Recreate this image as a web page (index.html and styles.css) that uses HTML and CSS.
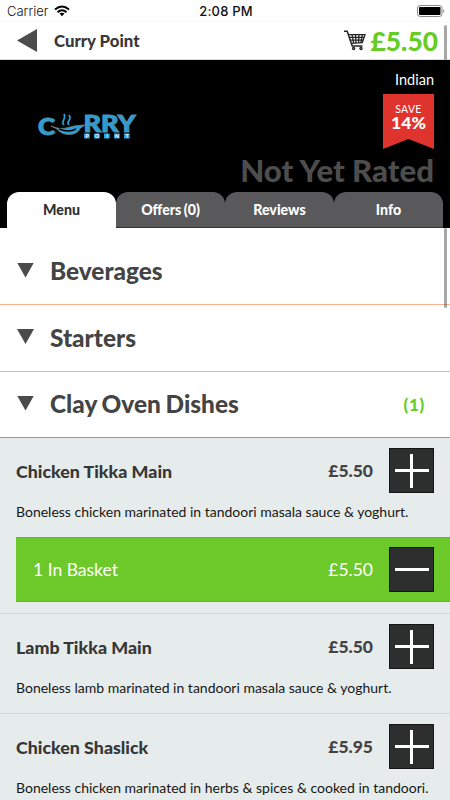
FILE: index.html
```html
<!DOCTYPE html>
<html lang="en">
<head>
<meta charset="utf-8">
<title>Curry Point</title>
<link rel="stylesheet" href="styles.css">
</head>
<body>
<div class="status">
  <div class="carrier"><span>Carrier</span>
    <svg width="16" height="12" viewBox="0 0 16 12"><g fill="none" stroke="#000" stroke-width="2"><path d="M1 4.6Q8-1.6 15 4.6"/><path d="M3.5 7.2Q8 3.2 12.5 7.2"/></g><path d="M5.5 8.6Q8 6.8 10.5 8.6L8 11.3Z"/></svg>
  </div>
  <div class="time">2:08 PM</div>
  <svg class="battery" width="28" height="12" viewBox="0 0 28 12"><rect x=".5" y=".5" width="24.5" height="11" rx="2.7" fill="#fff" stroke="#888"/><rect x="2" y="2" width="21.5" height="8" rx="1"/><path d="M26.3 4Q28.5 6 26.3 8Z" fill="#888"/></svg>
</div>
<header class="nav">
  <svg class="back" width="20" height="23" viewBox="0 0 20 23"><path d="M0 11.5L20 0V23Z" fill="#4d4d4d"/></svg>
  <h1>Curry Point</h1>
  <svg class="cart" width="22" height="21" viewBox="0 0 22 21" fill="none" stroke="#252525" stroke-width="1.3"><path d="M0 1.2H3.2L8.2 16H18.5" stroke-width="1.5"/><path d="M4 4.7H21L18.3 12.7L7.2 13.4M5 7.4H20M5.8 10.2H19M8 4.7L9.6 13M11.5 4.7L12 13M15 4.7L14.5 13M18.3 4.7L16.9 12.7"/><circle cx="9.6" cy="18.6" r="1.1"/><circle cx="17" cy="18.6" r="1.1"/></svg>
  <span class="total">£5.50</span>
</header>
<section class="hero">
  <svg class="logo" width="102" height="40" viewBox="0 -8 102 40">
    <g class="logo-type"><text x="0" y="26" font-size="22" textLength="17" lengthAdjust="spacingAndGlyphs">C</text><text x="45.5" y="23" font-size="22" textLength="52" lengthAdjust="spacingAndGlyphs">RRY</text></g>
    <path d="M13 17Q22 21 30 18.5Q37 16 47 16L42 19.5C39 27 25 28 19 20Z" fill="#299ed9" stroke="#8b8170" stroke-width=".7"/>
    <path d="M21 20Q31 24 38 20" fill="none" stroke="#000" stroke-width="1.6"/>
    <path d="M26 16C22 12 29 10 26 5M31 16C27 12 35 11 31 6" fill="none" stroke="#299ed9" stroke-width="1.7"/>
    <path d="M46 24.5h5.7v5H46zM56 24.5h5.7v5H56zM66 24.5h5.7v5H66zM76 24.5h5.7v5H76zM86 24.5h5.7v5H86z" fill="#299ed9"/>
    <g class="logo-small"><text x="47.4" y="29">P</text><text x="57" y="29">O</text><text x="68.2" y="29">I</text><text x="77" y="29">N</text><text x="87.4" y="29">T</text></g>
  </svg>
  <div class="facts">
    <div class="cuisine">Indian</div>
    <div class="ribbon"><span>SAVE</span><strong>14%</strong></div>
    <div class="rating">Not Yet Rated</div>
  </div>
</section>
<nav class="tabs"><div class="tab active">Menu</div><div class="tab">Offers (0)</div><div class="tab">Reviews</div><div class="tab">Info</div></nav>
<main>
  <div class="category first"><i></i><h2>Beverages</h2></div>
  <div class="category second"><i></i><h2>Starters</h2></div>
  <div class="category open"><i></i><h2>Clay Oven Dishes</h2><b>(1)</b></div>
  <article class="dish">
    <div class="line"><h3>Chicken Tikka Main</h3><span class="price">£5.50</span><span class="button plus"></span></div>
    <p>Boneless chicken marinated in tandoori masala sauce &amp; yoghurt.</p>
    <div class="basket"><span class="qty">1 In Basket</span><span class="price">£5.50</span><span class="button"></span></div>
  </article>
  <article class="dish">
    <div class="line"><h3>Lamb Tikka Main</h3><span class="price">£5.50</span><span class="button plus"></span></div>
    <p>Boneless lamb marinated in tandoori masala sauce &amp; yoghurt.</p>
  </article>
  <article class="dish">
    <div class="line"><h3>Chicken Shaslick</h3><span class="price">£5.95</span><span class="button plus"></span></div>
    <p>Boneless chicken marinated in herbs &amp; spices &amp; cooked in tandoori.</p>
  </article>
</main>
<div class="scroll top"></div><div class="scroll list"></div>
</body>
</html>
```
FILE: styles.css
```css
* { box-sizing: border-box; }
body { margin: 0; width: 450px; height: 800px; overflow: hidden; position: relative; background: #fff; color: #373737; font-family: Lato, sans-serif; white-space: nowrap; }
h1, h2, h3, p { margin: 0; }
svg { display: block; flex: none; }
.status { height: 22px; display: grid; grid-template-columns: 1fr auto 1fr; align-items: center; padding: 0 5px 0 7px; background: #fefefe; color: #111; font: 13px/22px Inter, sans-serif; border-bottom: 1px solid #f8f8f8; }
.carrier { display: flex; align-items: center; gap: 6px; font-weight: 300; }
.time { font-weight: 500; letter-spacing: .2px; }
.battery { justify-self: end; }
.nav { height: 38px; display: flex; align-items: center; padding: 0 12px 0 17px; border-bottom: 1px solid #ddd; }
.nav h1 { margin-left: 17px; font-size: 16.8px; line-height: 37px; font-weight: 900; flex: 1; }
.cart { margin-right: 4px; }
.total { font-size: 26.4px; line-height: 37px; font-weight: 900; color: #66cc25; position: relative; top: 1px; }
.hero { height: 132px; background: #000; display: flex; justify-content: space-between; padding: 0 16px 0 38px; }
.logo { margin-top: 41px; }
.logo-type { font-weight: 900; fill: #299ed9; stroke: #4f92b2; stroke-width: 1; }
.logo-small { font-size: 5px; font-weight: 700; fill: #fff; }
.facts { display: flex; flex-direction: column; align-items: flex-end; color: #fff; }
.cuisine { margin-top: 11px; font-size: 14.5px; line-height: 18px; }
.ribbon { margin-top: 5px; width: 51px; height: 55px; background: #df342e; clip-path: polygon(0 0, 100% 0, 100% 100%, 50% 82%, 0 100%); display: flex; flex-direction: column; align-items: center; padding-top: 9px; }
.ribbon span { font-size: 10.5px; line-height: 12px; letter-spacing: .3px; }
.ribbon strong { font-size: 17.5px; line-height: 15px; font-weight: 900; }
.rating { color: #4d4d4d; font-size: 31.2px; line-height: 38px; font-weight: 900; margin-top: 2px; }
.tabs { height: 36px; background: #000; display: grid; grid-template-columns: repeat(4, 1fr); padding: 0 7px 0 7px; }
.tab { height: 36px; background: #59595b; border-radius: 12px 12px 0 0; border-bottom: 1px solid #333; color: #fff; text-align: center; font-size: 14.2px; font-weight: 900; line-height: 35px; word-spacing: -1px; }
.active { background: #fff; border-color: #fff; color: #303030; }
.category { height: 66px; display: flex; align-items: center; padding: 0 25px 0 17px; border-bottom: 1px solid #f9b08d; }
.category.first { height: 77px; padding-top: 11px; }
.category.second { height: 67px; }
.category.open { border-color: #f28323; }
.category i { width: 17px; height: 15px; margin-right: 16px; margin-top: -3px; background: #4b4b4b; clip-path: polygon(0 0, 100% 0, 50% 100%); }
.category h2 { flex: 1; font-size: 24.4px; line-height: 30px; font-weight: 900; color: #444; word-spacing: -1px; margin-top: -1px; }
.category b { color: #66cc25; font-size: 17px; line-height: 22px; font-weight: 900; letter-spacing: .7px; }
.dish { background: #e6ecec; padding: 10px 0 10px 16px; border-bottom: 1px solid #d5d8d8; }
.dish:first-of-type { padding-bottom: 11px; }
.line { display: flex; align-items: center; height: 45px; padding-right: 16px; }
.line h3 { flex: 1; font-size: 17.8px; line-height: 24px; font-weight: 900; }
.price { width: 45px; margin-right: 16px; text-align: right; font-size: 17.5px; font-weight: 900; color: #444; }
.button { width: 45px; height: 45px; flex: none; border: 1px solid #151515; background: linear-gradient(#fff, #fff) center / 34px 3px no-repeat, #2d2e2e; }
.plus { background: linear-gradient(#fff, #fff) center / 34px 3px no-repeat, linear-gradient(#fff, #fff) center / 3px 34px no-repeat, #2d2e2e; }
.dish p { color: #171717; font-size: 14px; line-height: 20px; margin-top: 9px; height: 25px; }
.basket { margin-top: 10px; height: 65px; background: #6dc92a; border: solid #5dbd1e; border-width: 1px 0; display: flex; align-items: center; padding: 0 16px 0 17px; color: #fff; font-size: 17.5px; }
.basket .qty { flex: 1; }
.basket .price { font-weight: 400; color: #fff; }
.scroll { position: absolute; right: 3px; width: 3px; border-radius: 2px; background: rgba(80,80,80,.5); }
.top { top: 25px; height: 35px; }
.list { top: 228px; height: 80px; }
```
